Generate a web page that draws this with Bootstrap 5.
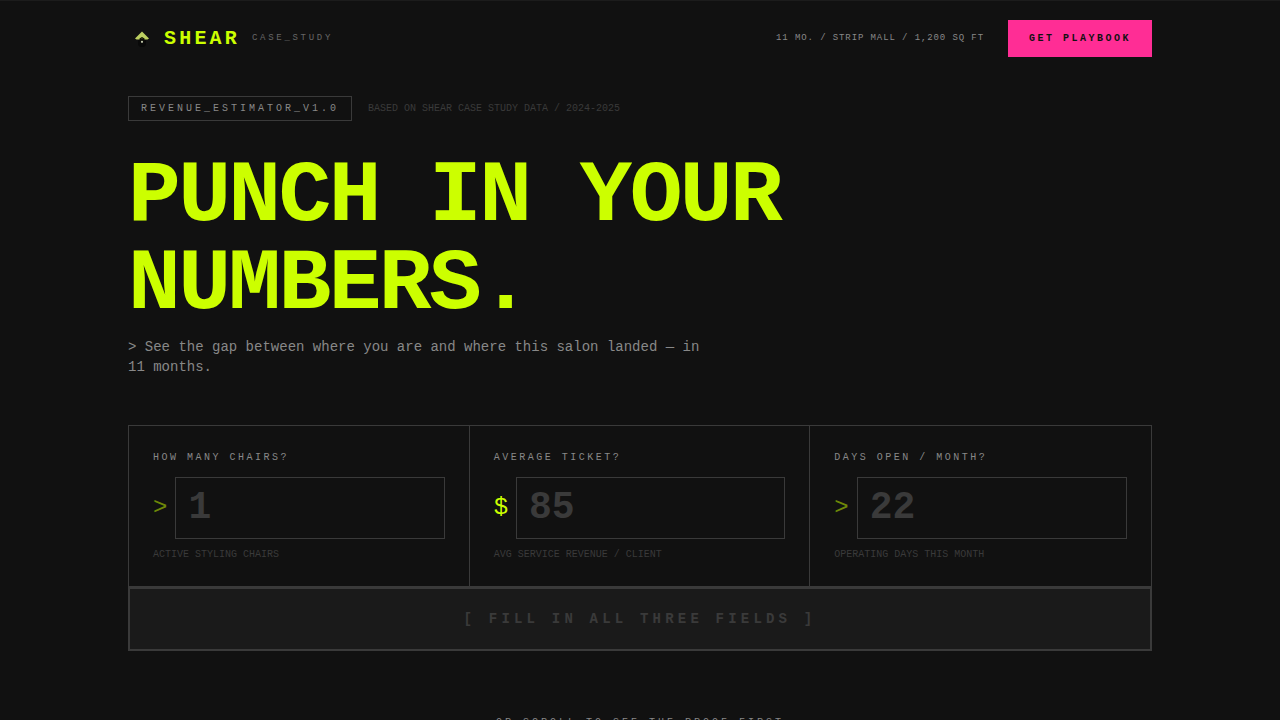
<!DOCTYPE html>
<html lang="en">
<head>
<meta charset="utf-8">
<meta name="viewport" content="width=device-width, initial-scale=1">
<title>SHEAR — Revenue Estimator</title>
<link href="https://cdn.jsdelivr.net/npm/bootstrap@5.3.0/dist/css/bootstrap.min.css" rel="stylesheet">
<style>
  :root { --lime: #ccff00; --pink: #ff2d95; --ink: #111111; --line: #3a3a3a; --dim: #888888; }
  body {
    background: var(--ink);
    border-top: 1px solid #1c1c1c;
    color: var(--dim);
    font-family: "Liberation Mono", "Courier New", monospace;
    font-size: 10px;
    line-height: 15px;
  }
  .shell { max-width: 1072px; }
  .topbar { padding-top: 19px; }
  .brand-name { color: var(--lime); font-size: 20px; line-height: 30px; letter-spacing: .16em; }
  .brand-tag { color: #666; font-size: 9px; letter-spacing: .3em; }
  .facts { font-size: 9px; letter-spacing: .1em; }
  .btn-playbook {
    --bs-btn-color: var(--ink); --bs-btn-bg: var(--pink); --bs-btn-border-color: var(--pink);
    --bs-btn-hover-color: var(--ink); --bs-btn-hover-bg: #ff57aa; --bs-btn-hover-border-color: #ff57aa;
    --bs-btn-padding-x: 20px; --bs-btn-padding-y: 10px;
    --bs-btn-font-size: 10px; --bs-btn-line-height: 15px;
    letter-spacing: .25em;
  }
  .hero { padding-top: 39px; }
  .version { border: 1px solid var(--line); padding: 4px 12px; letter-spacing: .3em; }
  .faint { color: var(--line); }
  .headline { color: var(--lime); font-size: 88px; line-height: 88px; letter-spacing: -.03em; margin: 32px 0 8px; }
  .lede { max-width: 580px; font-size: 14px; line-height: 20px; margin-bottom: 48px; }
  .fields { border: 1px solid var(--line); }
  .field { border-right: 1px solid var(--line); }
  .field:last-child { border-right: 0; }
  .field-label { letter-spacing: .25em; margin-bottom: 12px; }
  .prefix { color: var(--lime); font-size: 24px; line-height: 36px; }
  .prefix-idle { opacity: .5; }
  .num-input, .num-input:focus {
    background: transparent; color: var(--lime); border: 1px solid var(--line);
    padding: 7px 12px 9px; height: 62px; min-width: 0;
    font-size: 38px; line-height: 44px; font-weight: 700;
  }
  .num-input:focus { border-color: var(--lime); box-shadow: none; }
  .num-input::placeholder { color: var(--line); }
  .btn-run, .btn-run:disabled {
    background: #1a1a1a; color: var(--line); border: 2px solid var(--line); opacity: 1;
    padding: 20px; font-size: 14px; line-height: 20px; letter-spacing: .3em;
  }
  .scroll-note { letter-spacing: .3em; padding: 64px 0 48px; }
</style>
</head>
<body>
<header class="shell container-fluid px-4 topbar d-flex align-items-center justify-content-between">
  <div class="d-flex align-items-center">
    <svg class="me-2" width="28" height="28" viewBox="0 0 28 28" aria-hidden="true">
      <path d="M10 15h8v5l-2 2h-4l-2-2z" fill="#090909"/>
      <path d="M14 6.500 21 13.500 19.500 14.500H8.500L7 13.500z" fill="#bccf60"/>
      <path d="M11.500 16v-2.500L14 12l2.500 1.500V16z" fill="#0c0d06"/>
      <circle cx="14" cy="13" r="1" fill="#3a4016"/>
      <circle cx="14" cy="16.800" r="1.100" fill="#c9cfb0"/>
    </svg>
    <span class="brand-name fw-bold">SHEAR</span>
    <span class="brand-tag ms-2 ps-1">CASE_STUDY</span>
  </div>
  <div class="d-flex align-items-center gap-4">
    <span class="facts d-none d-md-inline">11 MO. / STRIP MALL / 1,200 SQ FT</span>
    <button type="button" class="btn btn-playbook rounded-0 fw-bold">GET PLAYBOOK</button>
  </div>
</header>

<main class="shell container-fluid px-4 hero">
  <div class="d-flex flex-wrap align-items-center gap-3">
    <span class="version">REVENUE_ESTIMATOR_V1.0</span>
    <span class="faint">BASED ON SHEAR CASE STUDY DATA / 2024-2025</span>
  </div>
  <h1 class="headline fw-bold">PUNCH IN YOUR NUMBERS.</h1>
  <p class="lede">&gt; See the gap between where you are and where this salon landed — in 11 months.</p>

  <form>
    <div class="fields row g-0">
      <div class="field col-12 col-md-4 p-4">
        <label class="field-label d-block" for="chairs">HOW MANY CHAIRS?</label>
        <div class="d-flex align-items-center gap-2 mb-2">
          <span class="prefix prefix-idle">&gt;</span>
          <input class="num-input form-control rounded-0" id="chairs" type="text" inputmode="numeric" placeholder="1">
        </div>
        <div class="faint">ACTIVE STYLING CHAIRS</div>
      </div>
      <div class="field col-12 col-md-4 p-4">
        <label class="field-label d-block" for="ticket">AVERAGE TICKET?</label>
        <div class="d-flex align-items-center gap-2 mb-2">
          <span class="prefix">$</span>
          <input class="num-input form-control rounded-0" id="ticket" type="text" inputmode="numeric" placeholder="85">
        </div>
        <div class="faint">AVG SERVICE REVENUE / CLIENT</div>
      </div>
      <div class="field col-12 col-md-4 p-4">
        <label class="field-label d-block" for="days">DAYS OPEN / MONTH?</label>
        <div class="d-flex align-items-center gap-2 mb-2">
          <span class="prefix prefix-idle">&gt;</span>
          <input class="num-input form-control rounded-0" id="days" type="text" inputmode="numeric" placeholder="22">
        </div>
        <div class="faint">OPERATING DAYS THIS MONTH</div>
      </div>
    </div>
    <button type="submit" class="btn btn-run rounded-0 w-100 fw-bold" disabled>[ FILL IN ALL THREE FIELDS ]</button>
  </form>
  <p class="scroll-note text-center mb-0">OR SCROLL TO SEE THE PROOF FIRST</p>
</main>
<script src="https://cdn.jsdelivr.net/npm/bootstrap@5.3.0/dist/js/bootstrap.bundle.min.js"></script>
</body>
</html>
